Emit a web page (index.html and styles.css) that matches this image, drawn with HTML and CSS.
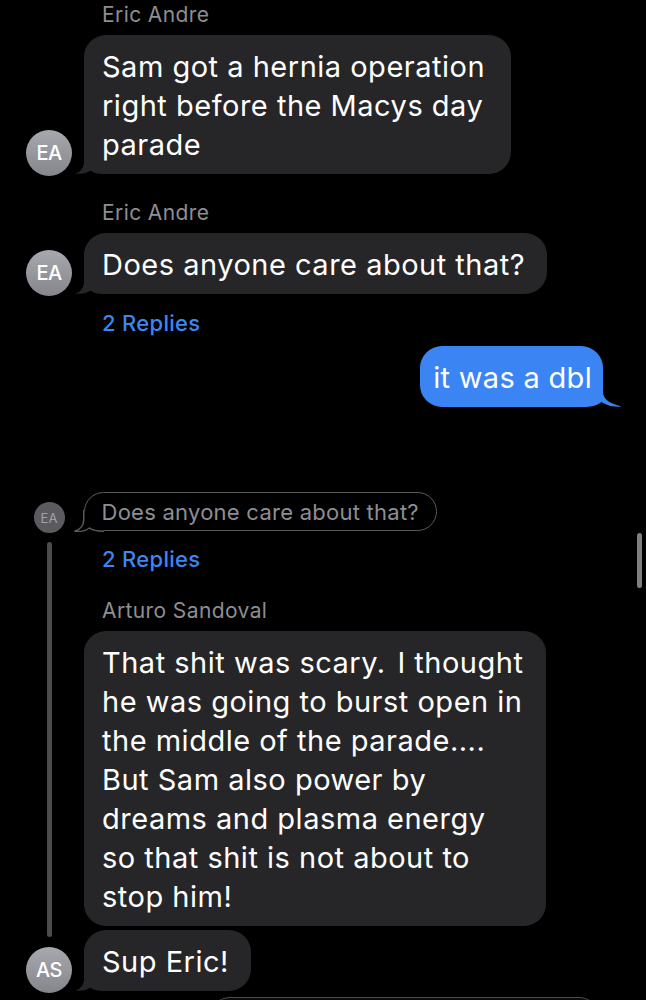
FILE: index.html
```html
<!DOCTYPE html>
<html lang="en">
<head>
<meta charset="utf-8">
<title>Messages</title>
<link rel="stylesheet" href="styles.css">
</head>
<body>
<div class="screen">
  <div class="chat">
    <section class="group">
      <div class="sender">Eric Andre</div>
      <div class="row">
        <div class="avatar">EA</div>
        <div class="bubble bubble-first">Sam got a hernia operation<br>right before the Macys day<br>parade<svg class="tail tail-in" viewBox="0 0 30 22"><path d="M9 0V10C9 15.5 6 19.5 0.5 21.5C6.5 22.5 12 21 15.5 18.5C18 20.8 22 22 30 22V0Z"/></svg></div>
      </div>
    </section>

    <section class="group group-next">
      <div class="sender">Eric Andre</div>
      <div class="row">
        <div class="avatar">EA</div>
        <div class="bubble">Does anyone care about that?<svg class="tail tail-in" viewBox="0 0 30 22"><path d="M9 0V10C9 15.5 6 19.5 0.5 21.5C6.5 22.5 12 21 15.5 18.5C18 20.8 22 22 30 22V0Z"/></svg></div>
      </div>
      <div class="replies">2 Replies</div>
    </section>

    <div class="row row-out">
      <div class="bubble bubble-out">it was a dbl<svg class="tail tail-out" viewBox="0 0 40 24"><path d="M21 0V8C21 15 25 20 39.5 23.5C31 24.5 24 22 19.5 19C16 22 10 24 0 24V0Z"/></svg></div>
    </div>

    <section class="thread">
      <div class="rail">
        <div class="avatar avatar-small">EA</div>
        <div class="rail-line"></div>
        <div class="avatar">AS</div>
      </div>
      <div class="thread-body">
        <div class="quote">Does anyone care about that?<svg class="tail tail-quote" viewBox="0 0 30 22"><path d="M9.75 0V10C9.75 15.5 6 19.5 0.5 21.25C6.5 22 12 20.5 15.5 18C18 20.3 22 21.25 30 21.25"/></svg></div>
        <div class="replies replies-thread">2 Replies</div>
        <div class="sender sender-thread">Arturo Sandoval</div>
        <div class="bubble bubble-long">That shit was scary.&#8202; I thought<br>he was going to burst open in<br>the middle of the parade....<br>But Sam also power by<br>dreams and plasma energy<br>so that shit is not about to<br>stop him!</div>
        <div class="bubble bubble-short">Sup Eric!<svg class="tail tail-in" viewBox="0 0 30 22"><path d="M9 0V10C9 15.5 6 19.5 0.5 21.5C6.5 22.5 12 21 15.5 18.5C18 20.8 22 22 30 22V0Z"/></svg></div>
      </div>
    </section>

    <div class="peek"></div>
  </div>
  <div class="scroll-indicator"></div>
</div>
</body>
</html>
```

FILE: styles.css
```css
html, body {
  margin: 0;
  padding: 0;
  background: #000;
  overflow: hidden;
}

body {
  font-family: Inter, "Noto Sans", "Liberation Sans", sans-serif;
  color: #fff;
}

.screen {
  position: relative;
  width: 646px;
  height: 1000px;
  overflow: hidden;
}

.chat {
  padding: 3px 0 0 26px;
}

.sender {
  padding-left: 76px;
  font-size: 21px;
  line-height: 24px;
  letter-spacing: 0.4px;
  color: #8e8e93;
  margin-bottom: 8px;
}

.group-next {
  margin-top: 27px;
}

.row {
  display: flex;
  align-items: flex-end;
  gap: 12px;
}

.avatar {
  flex: none;
  width: 46px;
  height: 46px;
  border-radius: 50%;
  background: linear-gradient(#a8a9af, #85868c);
  color: #fff;
  font-size: 20px;
  font-weight: 500;
  display: flex;
  align-items: center;
  justify-content: center;
  margin-bottom: -2px;
  letter-spacing: -0.5px;
}

.bubble {
  position: relative;
  isolation: isolate;
  background: #262628;
  border-radius: 22px;
  padding: 12px 22px 10px 18px;
  font-size: 29px;
  line-height: 39px;
  letter-spacing: 0.5px;
  white-space: nowrap;
}

.bubble-first {
  padding-right: 26px;
}

.tail {
  position: absolute;
  bottom: 0;
  z-index: -1;
}

.tail-in {
  left: -9px;
  width: 30px;
  height: 22px;
  fill: #262628;
}

.replies {
  padding-left: 76px;
  margin-top: 17px;
  font-size: 22px;
  line-height: 24px;
  letter-spacing: 0.3px;
  font-weight: 500;
  color: #3d86f2;
}

.row-out {
  justify-content: flex-end;
  padding-right: 43px;
  margin-top: 11px;
}

.bubble-out {
  background: #3b84f4;
  padding: 12px 11px 10px 13px;
  letter-spacing: 0.3px;
}

.tail-out {
  right: -19px;
  width: 40px;
  height: 24px;
  fill: #3b84f4;
}

.thread {
  display: flex;
  gap: 12px;
  margin-top: 85px;
}

.rail {
  width: 46px;
  display: flex;
  flex-direction: column;
  align-items: center;
}

.avatar-small {
  width: 31px;
  height: 31px;
  margin: 10px 0 0;
  background: #5b5b5f;
  color: #a2a2a6;
  font-size: 13px;
  font-weight: 400;
  letter-spacing: 0;
}

.rail-line {
  flex: 1;
  width: 5px;
  border-radius: 3px;
  background: #4d4d50;
  margin: 9px 0 10px;
}

.thread-body {
  display: flex;
  flex-direction: column;
  align-items: flex-start;
}

.quote {
  position: relative;
  isolation: isolate;
  border: 1.5px solid #5a5a5e;
  border-radius: 20px;
  padding: 5.5px 17px 5.5px 16.5px;
  font-size: 22px;
  line-height: 26px;
  letter-spacing: 0.25px;
  color: #8e8e93;
  white-space: nowrap;
}

.tail-quote {
  left: -11px;
  bottom: -1.5px;
  width: 30px;
  height: 22px;
  fill: #000;
  stroke: #5a5a5e;
  stroke-width: 1.5px;
}

.replies-thread {
  padding-left: 18px;
  margin-top: 16px;
}

.sender-thread {
  padding-left: 18px;
  margin-top: 28px;
}

.bubble-long {
  padding-right: 23px;
}

.bubble-short {
  margin-top: 4px;
}

.peek {
  margin: 6px 0 0 184px;
  width: 387px;
  height: 40px;
  border: 1.5px solid #4e4e52;
  border-radius: 20px;
  background: #0a0a0a;
}

.scroll-indicator {
  position: absolute;
  left: 637px;
  top: 533px;
  width: 5px;
  height: 55px;
  border-radius: 3px;
  background: #7f7f7f;
}
```
